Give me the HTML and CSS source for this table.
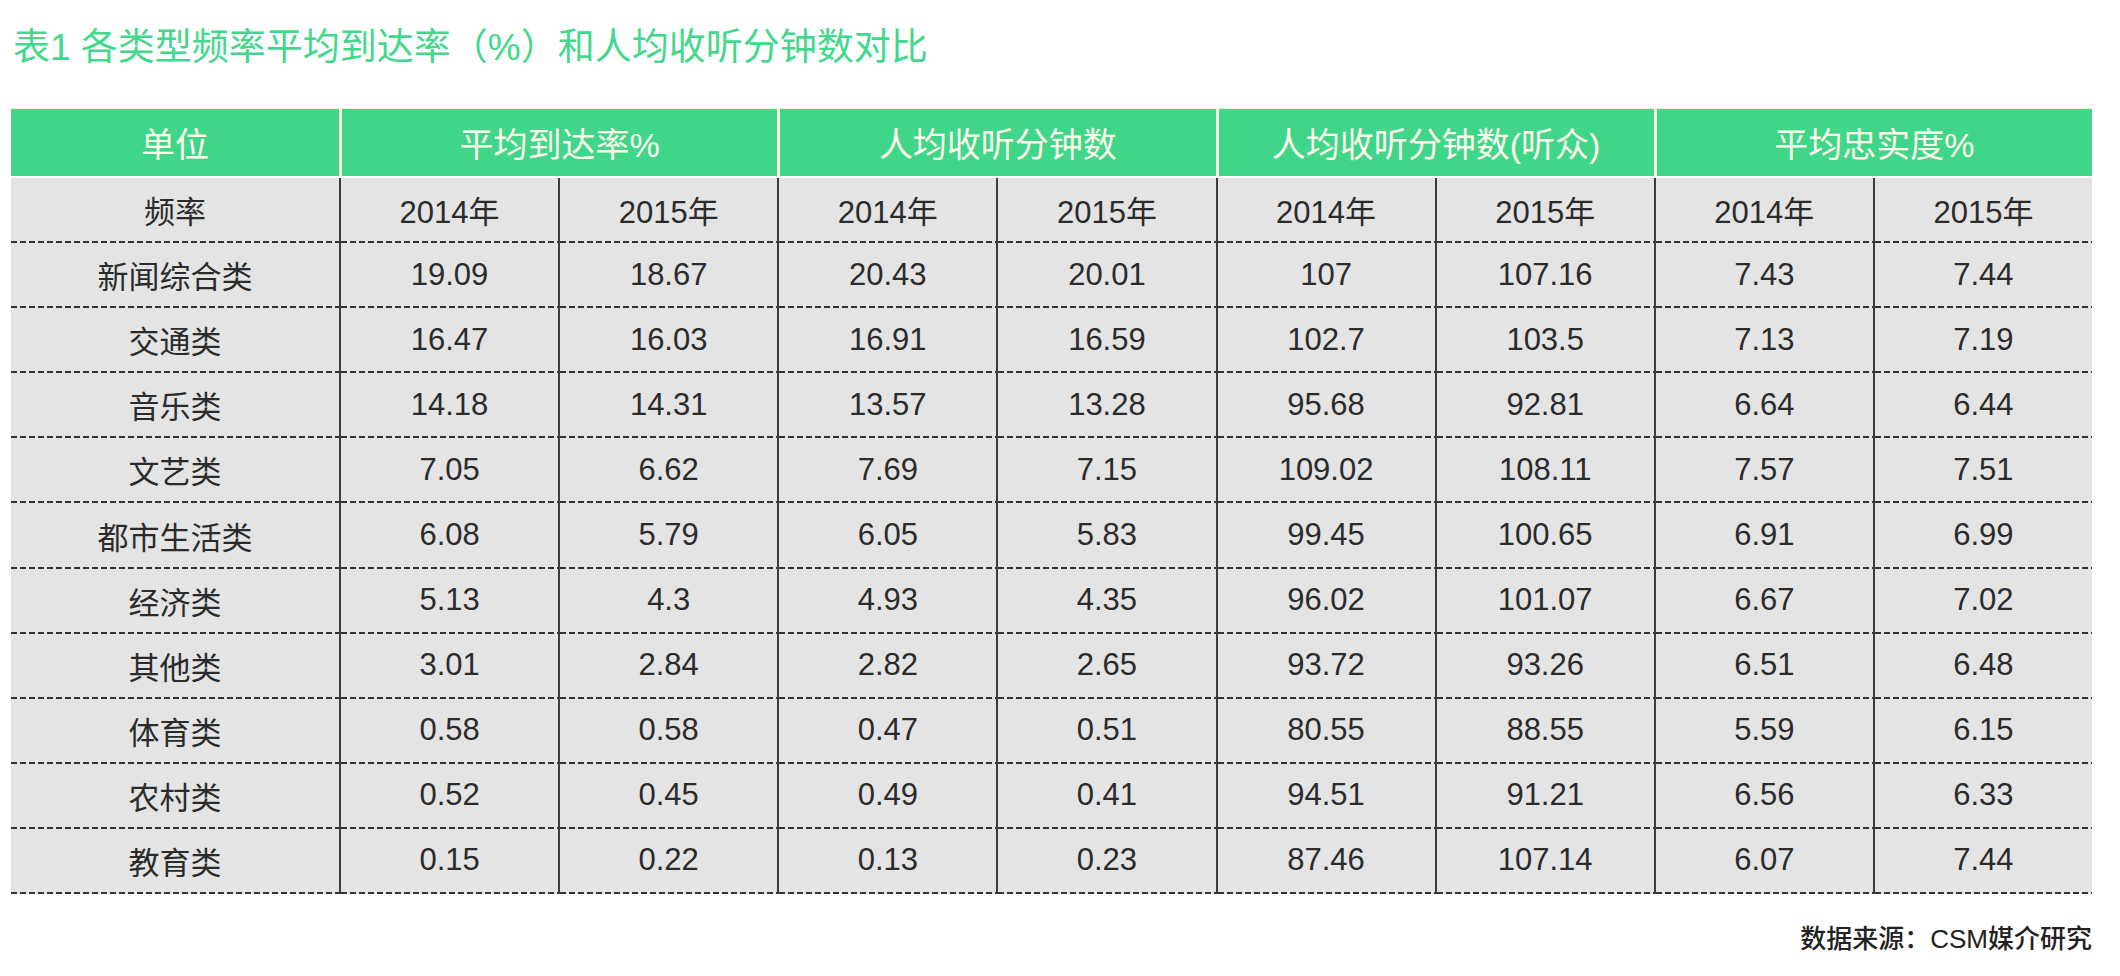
FILE: index.html
```html
<!DOCTYPE html>
<html lang="zh-CN">
<head>
<meta charset="utf-8">
<title>表1 各类型频率平均到达率（%）和人均收听分钟数对比</title>
<link rel="stylesheet" href="styles.css">
</head>
<body>
<div class="page">
  <h1 class="title">表1 各类型频率平均到达率（%）和人均收听分钟数对比</h1>
  <table class="data">
    <colgroup>
      <col class="c-first">
      <col><col><col><col><col><col><col><col>
    </colgroup>
    <thead>
      <tr>
        <th>单位</th>
        <th colspan="2">平均到达率%</th>
        <th colspan="2">人均收听分钟数</th>
        <th colspan="2">人均收听分钟数(听众)</th>
        <th colspan="2">平均忠实度%</th>
      </tr>
    </thead>
    <tbody>
      <tr><td>频率</td><td>2014年</td><td>2015年</td><td>2014年</td><td>2015年</td><td>2014年</td><td>2015年</td><td>2014年</td><td>2015年</td></tr>
      <tr><td>新闻综合类</td><td>19.09</td><td>18.67</td><td>20.43</td><td>20.01</td><td>107</td><td>107.16</td><td>7.43</td><td>7.44</td></tr>
      <tr><td>交通类</td><td>16.47</td><td>16.03</td><td>16.91</td><td>16.59</td><td>102.7</td><td>103.5</td><td>7.13</td><td>7.19</td></tr>
      <tr><td>音乐类</td><td>14.18</td><td>14.31</td><td>13.57</td><td>13.28</td><td>95.68</td><td>92.81</td><td>6.64</td><td>6.44</td></tr>
      <tr><td>文艺类</td><td>7.05</td><td>6.62</td><td>7.69</td><td>7.15</td><td>109.02</td><td>108.11</td><td>7.57</td><td>7.51</td></tr>
      <tr><td>都市生活类</td><td>6.08</td><td>5.79</td><td>6.05</td><td>5.83</td><td>99.45</td><td>100.65</td><td>6.91</td><td>6.99</td></tr>
      <tr><td>经济类</td><td>5.13</td><td>4.3</td><td>4.93</td><td>4.35</td><td>96.02</td><td>101.07</td><td>6.67</td><td>7.02</td></tr>
      <tr><td>其他类</td><td>3.01</td><td>2.84</td><td>2.82</td><td>2.65</td><td>93.72</td><td>93.26</td><td>6.51</td><td>6.48</td></tr>
      <tr><td>体育类</td><td>0.58</td><td>0.58</td><td>0.47</td><td>0.51</td><td>80.55</td><td>88.55</td><td>5.59</td><td>6.15</td></tr>
      <tr><td>农村类</td><td>0.52</td><td>0.45</td><td>0.49</td><td>0.41</td><td>94.51</td><td>91.21</td><td>6.56</td><td>6.33</td></tr>
      <tr><td>教育类</td><td>0.15</td><td>0.22</td><td>0.13</td><td>0.23</td><td>87.46</td><td>107.14</td><td>6.07</td><td>7.44</td></tr>
    </tbody>
  </table>
  <p class="source">数据来源：CSM媒介研究</p>
</div>
</body>
</html>
```
FILE: styles.css
```css
html, body {
  margin: 0;
  padding: 0;
  background: #ffffff;
}

body {
  font-family: "Liberation Sans", "Noto Sans CJK SC", sans-serif;
  color: #2b2b2b;
}

.page {
  width: 2081px;
  padding: 29px 0 0 11px;
}

.title {
  margin: 0 0 42px 2px;
  font-size: 37px;
  line-height: 37px;
  font-weight: 400;
  color: #42d88c;
  white-space: nowrap;
}

.data {
  width: 2081px;
  table-layout: fixed;
  border-collapse: separate;
  border-spacing: 0;
}

.c-first {
  width: 328px;
}

.data th {
  height: 67px;
  padding: 0;
  background: #3fd68a;
  color: #fffbec;
  font-size: 34px;
  font-weight: 400;
  text-align: center;
  vertical-align: middle;
  border-top: 1px solid #f7f0c8;
  border-bottom: 2px solid #ffffff;
}

.data th + th {
  border-left: 3px solid #fbf8ea;
}

.data td {
  height: 65.1px;
  padding: 0 0 2px 0;
  box-sizing: border-box;
  font-size: 31px;
  text-align: center;
  vertical-align: middle;
  background-color: #e4e4e4;
  background-image: linear-gradient(90deg, #333333 0 6px, transparent 6px 9px);
  background-size: 9px 2px;
  background-repeat: repeat-x;
  background-position: left bottom;
  white-space: nowrap;
}

.data td + td {
  border-left: 2px solid #3c3c3c;
}

.source {
  margin: 32px 0 0 0;
  font-size: 26px;
  line-height: 26px;
  font-weight: 500;
  color: #222222;
  text-align: right;
}
```
